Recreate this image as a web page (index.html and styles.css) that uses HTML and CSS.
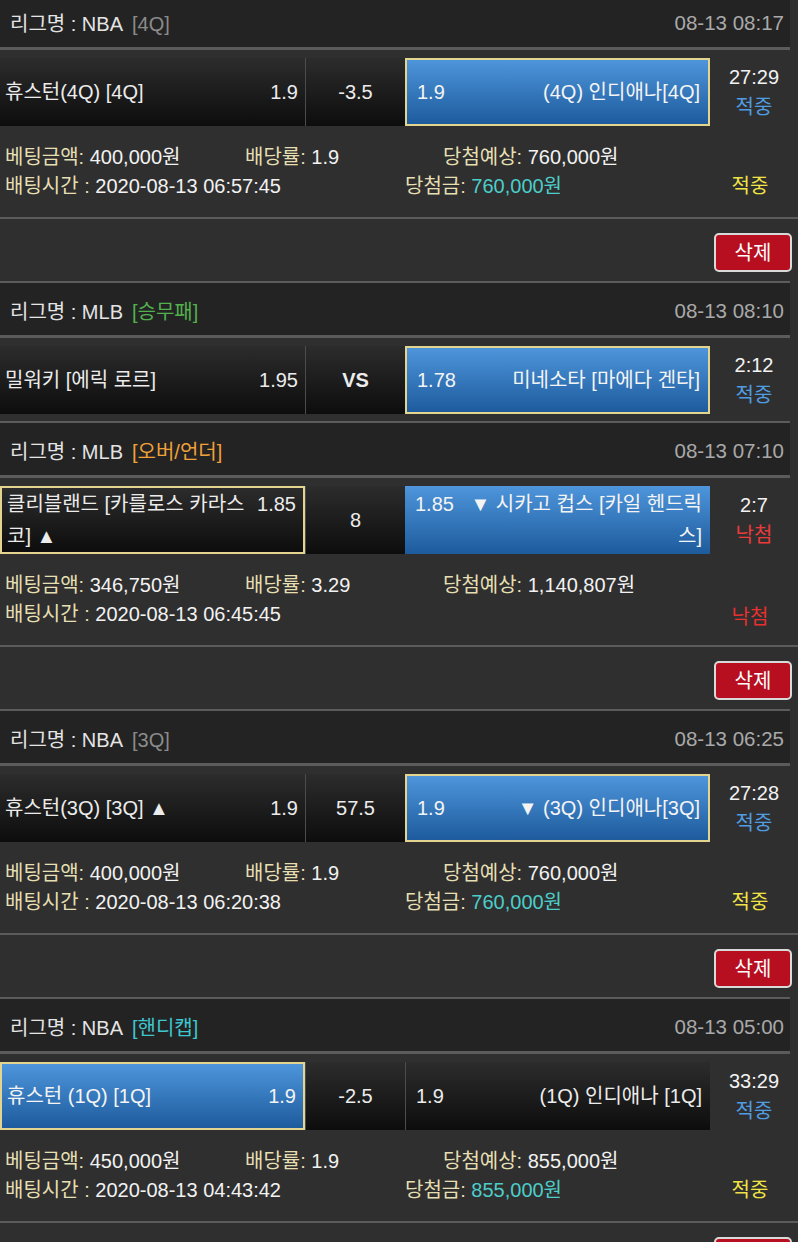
FILE: index.html
```html
<!DOCTYPE html>
<html lang="ko">
<head>
<meta charset="utf-8">
<title>배팅내역</title>
<link rel="stylesheet" href="styles.css">
</head>
<body>
<div class="list">

  <div class="bet">
    <div class="game">
      <div class="head"><span class="league">리그명 : NBA</span><span class="tag gray">[4Q]</span><span class="time">08-13 08:17</span></div>
      <div class="match">
        <div class="cell home"><span class="team">휴스턴(4Q) [4Q]</span><span class="odds">1.9</span></div>
        <div class="cell mid">-3.5</div>
        <div class="cell away blue picked"><span class="odds">1.9</span><span class="team">(4Q) 인디애나[4Q]</span></div>
        <div class="score"><span>27:29</span><span class="hit">적중</span></div>
      </div>
    </div>
    <div class="details">
      <div class="line"><span class="c1"><span class="lbl">베팅금액:</span> 400,000원</span><span class="c2"><span class="lbl">배당률:</span> 1.9</span><span><span class="lbl">당첨예상:</span> 760,000원</span></div>
      <div class="line"><span class="c1w"><span class="lbl">배팅시간 :</span> 2020-08-13 06:57:45</span><span><span class="lbl">당첨금:</span> <span class="teal">760,000원</span></span><span class="res win">적중</span></div>
    </div>
    <div class="actions"><button class="del">삭제</button></div>
  </div>

  <div class="bet">
    <div class="game">
      <div class="head"><span class="league">리그명 : MLB</span><span class="tag green">[승무패]</span><span class="time">08-13 08:10</span></div>
      <div class="match">
        <div class="cell home"><span class="team">밀워키 [에릭 로르]</span><span class="odds">1.95</span></div>
        <div class="cell mid vs">VS</div>
        <div class="cell away blue picked"><span class="odds">1.78</span><span class="team">미네소타 [마에다 겐타]</span></div>
        <div class="score"><span>2:12</span><span class="hit">적중</span></div>
      </div>
    </div>
    <div class="game">
      <div class="head"><span class="league">리그명 : MLB</span><span class="tag orange">[오버/언더]</span><span class="time">08-13 07:10</span></div>
      <div class="match">
        <div class="cell home picked"><div class="wrap"><span class="odds fr">1.85</span>클리블랜드 [카를로스 카라스코] ▲</div></div>
        <div class="cell mid">8</div>
        <div class="cell away blue"><div class="wrap ra"><span class="odds fl">1.85</span>▼ 시카고 컵스 [카일 헨드릭스]</div></div>
        <div class="score"><span>2:7</span><span class="miss">낙첨</span></div>
      </div>
    </div>
    <div class="details">
      <div class="line"><span class="c1"><span class="lbl">베팅금액:</span> 346,750원</span><span class="c2"><span class="lbl">배당률:</span> 3.29</span><span><span class="lbl">당첨예상:</span> 1,140,807원</span></div>
      <div class="line"><span class="c1w"><span class="lbl">배팅시간 :</span> 2020-08-13 06:45:45</span><span class="res lose">낙첨</span></div>
    </div>
    <div class="actions"><button class="del">삭제</button></div>
  </div>

  <div class="bet">
    <div class="game">
      <div class="head"><span class="league">리그명 : NBA</span><span class="tag gray">[3Q]</span><span class="time">08-13 06:25</span></div>
      <div class="match">
        <div class="cell home"><span class="team">휴스턴(3Q) [3Q] ▲</span><span class="odds">1.9</span></div>
        <div class="cell mid">57.5</div>
        <div class="cell away blue picked"><span class="odds">1.9</span><span class="team">▼ (3Q) 인디애나[3Q]</span></div>
        <div class="score"><span>27:28</span><span class="hit">적중</span></div>
      </div>
    </div>
    <div class="details">
      <div class="line"><span class="c1"><span class="lbl">베팅금액:</span> 400,000원</span><span class="c2"><span class="lbl">배당률:</span> 1.9</span><span><span class="lbl">당첨예상:</span> 760,000원</span></div>
      <div class="line"><span class="c1w"><span class="lbl">배팅시간 :</span> 2020-08-13 06:20:38</span><span><span class="lbl">당첨금:</span> <span class="teal">760,000원</span></span><span class="res win">적중</span></div>
    </div>
    <div class="actions"><button class="del">삭제</button></div>
  </div>

  <div class="bet">
    <div class="game">
      <div class="head"><span class="league">리그명 : NBA</span><span class="tag teal">[핸디캡]</span><span class="time">08-13 05:00</span></div>
      <div class="match">
        <div class="cell home blue picked"><span class="team">휴스턴 (1Q) [1Q]</span><span class="odds">1.9</span></div>
        <div class="cell mid">-2.5</div>
        <div class="cell away dark"><span class="odds">1.9</span><span class="team">(1Q) 인디애나 [1Q]</span></div>
        <div class="score"><span>33:29</span><span class="hit">적중</span></div>
      </div>
    </div>
    <div class="details">
      <div class="line"><span class="c1"><span class="lbl">베팅금액:</span> 450,000원</span><span class="c2"><span class="lbl">배당률:</span> 1.9</span><span><span class="lbl">당첨예상:</span> 855,000원</span></div>
      <div class="line"><span class="c1w"><span class="lbl">배팅시간 :</span> 2020-08-13 04:43:42</span><span><span class="lbl">당첨금:</span> <span class="teal">855,000원</span></span><span class="res win">적중</span></div>
    </div>
    <div class="actions"><button class="del">삭제</button></div>
  </div>

</div>
</body>
</html>
```

FILE: styles.css
```css
html, body {
  margin: 0;
  padding: 0;
}
body {
  background: #2f2f2f;
  color: #f2f2f2;
  font-family: "Liberation Sans", "Noto Sans CJK KR", sans-serif;
  font-size: 20px;
  line-height: 1.2;
  overflow: hidden;
  width: 798px;
  height: 1242px;
}

.head {
  box-sizing: border-box;
  height: 57px;
  margin-right: 8px;
  padding: 5px 6px 0 10px;
  display: flex;
  align-items: center;
  background: #232323;
  border-top: 2px solid #5b5b5b;
  border-bottom: 3px solid #5b5b5b;
}
.bet:first-child .game:first-child .head {
  margin-top: -7px;
}
.league {
  color: #e4e4e4;
}
.tag {
  margin-left: 9px;
}
.tag.gray { color: #8b8b8b; }
.tag.green { color: #52b04e; }
.tag.orange { color: #f0a13a; }
.tag.teal { color: #3ec6cf; }
.time {
  margin-left: auto;
  color: #a9a9a9;
  font-size: 20.5px;
}

.match {
  display: grid;
  grid-template-columns: 305px 100px 305px 1fr;
  padding: 8px 0 7px;
}
.cell {
  box-sizing: border-box;
  height: 68px;
  display: flex;
  align-items: center;
  background: linear-gradient(#2c2c2c, #0d0d0d);
  color: #ececec;
}
.home {
  padding: 0 7px 0 5px;
}
.home .team {
  flex: 1;
}
.mid {
  justify-content: center;
  border-left: 1px solid #4c4c4c;
}
.mid.vs {
  font-weight: bold;
}
.away {
  padding: 0 8px 0 10px;
}
.away.dark {
  border-left: 1px solid #4c4c4c;
}
.away .team {
  flex: 1;
  text-align: right;
}
.blue {
  background: linear-gradient(#4e95db, #1d5b9d);
  color: #f4f4f4;
}
.picked {
  border: 2px solid #e3d58f;
}
.wrap {
  flex: 1;
  line-height: 32px;
}
.wrap.ra {
  text-align: right;
}
.fr {
  float: right;
  margin-left: 10px;
}
.fl {
  float: left;
  margin-right: 10px;
}
.score {
  display: flex;
  flex-direction: column;
  align-items: center;
  justify-content: center;
  line-height: 30px;
  color: #f2f2f2;
}
.hit { color: #4f9de2; }
.miss { color: #ea3b3b; }

.details {
  padding: 10px 0 16px 5px;
  line-height: 29px;
  border-bottom: 2px solid #5b5b5b;
}
.line {
  display: flex;
}
.c1 { width: 240px; }
.c2 { width: 198px; }
.c1w { width: 400px; }
.lbl { color: #e6dfb2; }
.teal { color: #4ccdc9; }
.res {
  margin-left: auto;
  margin-right: 8px;
  width: 80px;
  text-align: center;
}
.res.win { color: #efe346; }
.res.lose { color: #e8302f; position: relative; top: 3px; }

.actions {
  display: flex;
  justify-content: flex-end;
  padding: 14px 6px 9px 0;
}
.del {
  width: 78px;
  height: 39px;
  background: #b70f1f;
  border: 2px solid #d9d9d9;
  border-radius: 5px;
  color: #ffffff;
  font: inherit;
  padding: 0;
}
```
